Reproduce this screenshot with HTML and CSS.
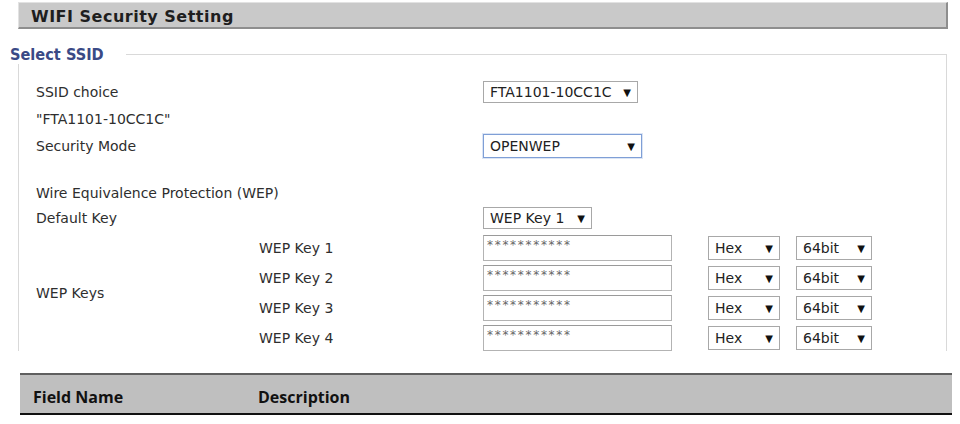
FILE: index.html
```html
<!DOCTYPE html>
<html>
<head>
<meta charset="utf-8">
<link rel="stylesheet" href="styles.css">
</head>
<body>
<div class="top">
  <div class="title-bar">WIFI Security Setting</div>
  <fieldset class="box">
    <legend class="legend">Select SSID</legend>
    <div class="row r-ssid">
      <div class="lbl wide">SSID choice</div>
      <div class="cell"><span class="sel w-ssid"><span class="val">FTA1101-10CC1C</span><span class="arr">▼</span></span></div>
    </div>
    <div class="row r-name">
      <div class="lbl wide">"FTA1101-10CC1C"</div>
    </div>
    <div class="row r-mode">
      <div class="lbl wide">Security Mode</div>
      <div class="cell"><span class="sel w-mode focus"><span class="val">OPENWEP</span><span class="arr">▼</span></span></div>
    </div>
    <div class="row r-wep">
      <div class="lbl wide">Wire Equivalence Protection (WEP)</div>
    </div>
    <div class="row r-def">
      <div class="lbl wide">Default Key</div>
      <div class="cell"><span class="sel w-def"><span class="val">WEP Key 1</span><span class="arr">▼</span></span></div>
    </div>
    <div class="keys">
      <div class="keys-lbl">WEP Keys</div>
      <div class="key-row">
        <div class="sub">WEP Key 1</div>
        <div class="cell"><span class="txt">***********</span></div>
        <div class="cell"><span class="sel w-hex"><span class="val">Hex</span><span class="arr">▼</span></span></div>
        <div class="cell"><span class="sel w-bit"><span class="val">64bit</span><span class="arr">▼</span></span></div>
      </div>
      <div class="key-row">
        <div class="sub">WEP Key 2</div>
        <div class="cell"><span class="txt">***********</span></div>
        <div class="cell"><span class="sel w-hex"><span class="val">Hex</span><span class="arr">▼</span></span></div>
        <div class="cell"><span class="sel w-bit"><span class="val">64bit</span><span class="arr">▼</span></span></div>
      </div>
      <div class="key-row">
        <div class="sub">WEP Key 3</div>
        <div class="cell"><span class="txt">***********</span></div>
        <div class="cell"><span class="sel w-hex"><span class="val">Hex</span><span class="arr">▼</span></span></div>
        <div class="cell"><span class="sel w-bit"><span class="val">64bit</span><span class="arr">▼</span></span></div>
      </div>
      <div class="key-row">
        <div class="sub">WEP Key 4</div>
        <div class="cell"><span class="txt">***********</span></div>
        <div class="cell"><span class="sel w-hex"><span class="val">Hex</span><span class="arr">▼</span></span></div>
        <div class="cell"><span class="sel w-bit"><span class="val">64bit</span><span class="arr">▼</span></span></div>
      </div>
    </div>
  </fieldset>
</div>
<div class="table-head">
  <div class="th th-name">Field Name</div>
  <div class="th">Description</div>
</div>
</body>
</html>
```
FILE: styles.css
```css
html, body {
  margin: 0;
  padding: 0;
  background: #ffffff;
}
body {
  font-family: "DejaVu Sans", Verdana, sans-serif;
  color: #2e2e2e;
}
.top {
  height: 351px;
  overflow: hidden;
}
.title-bar {
  margin: 2px 12px 0 18px;
  height: 24px;
  background: #c9c9c9;
  border-top: 1px solid #e2e2e2;
  border-left: 1px solid #e2e2e2;
  border-right: 2px solid #8e8e8e;
  border-bottom: 2px solid #8e8e8e;
  box-sizing: content-box;
  padding-left: 12px;
  font-weight: bold;
  font-size: 16px;
  line-height: 27px;
  color: #1e1e1e;
  letter-spacing: 0.5px;
}
.box {
  margin: 16px 13px 0 18px;
  padding: 15px 0 40px 17px;
  border: 1px solid #d9d9d9;
  min-width: 0;
}
.legend {
  margin-left: -26px;
  padding: 0 22px 0 0;
  font-family: "DejaVu Sans Condensed", "DejaVu Sans", sans-serif;
  font-weight: bold;
  font-size: 16.2px;
  color: #3a4a86;
  background: #fff;
}
.row {
  display: grid;
  grid-template-columns: 447px 1fr;
  align-items: center;
  font-size: 14px;
}
.r-ssid { height: 26px; }
.r-name { height: 27px; }
.r-mode { height: 28px; }
.r-wep { height: 24px; margin-top: 21px; }
.r-def { height: 26px; }
.lbl {
  white-space: nowrap;
}
.sel {
  display: inline-flex;
  align-items: center;
  justify-content: space-between;
  box-sizing: border-box;
  border: 1px solid #a8a8a8;
  background: #fff;
  padding: 0 6px 0 6px;
  font-size: 14px;
  color: #222;
  vertical-align: middle;
}
.sel .arr {
  font-size: 10px;
  color: #111;
}
.focus {
  border: 1px solid #7f9fd6;
  box-shadow: 0 0 0 1px #dbe5f5;
}
.w-ssid { width: 155px; height: 22px; }
.w-mode { width: 159px; height: 24px; }
.w-def { width: 109px; height: 22px; }
.w-hex { width: 72px; height: 24px; }
.w-bit { width: 76px; height: 24px; }
.keys {
  display: grid;
  grid-template-columns: 223px 1fr;
  align-items: center;
  margin-top: 2px;
  font-size: 14px;
}
.keys-lbl {
  grid-row: 1 / span 4;
  grid-column: 1;
}
.key-row {
  grid-column: 2;
  display: grid;
  grid-template-columns: 224px 225px 88px 1fr;
  align-items: center;
  height: 30px;
}
.txt {
  display: block;
  box-sizing: border-box;
  width: 189px;
  height: 26px;
  border: 1px solid #b3b3b3;
  border-top-color: #9a9a9a;
  padding: 3px 0 0 3px;
  font-size: 12px;
  letter-spacing: 1.7px;
  color: #666;
  line-height: 12px;
}
.table-head {
  margin: 22px 8px 0 20px;
  height: 32px;
  padding-top: 6px;
  background: #bfbfbf;
  border-top: 2px solid #5f5f5f;
  border-bottom: 2px solid #111;
  display: flex;
  align-items: center;
  font-family: "Open Sans", "Liberation Sans", sans-serif;
  font-weight: bold;
  font-size: 16px;
  color: #111;
}
.th-name {
  width: 225px;
  padding-left: 13px;
}
```
